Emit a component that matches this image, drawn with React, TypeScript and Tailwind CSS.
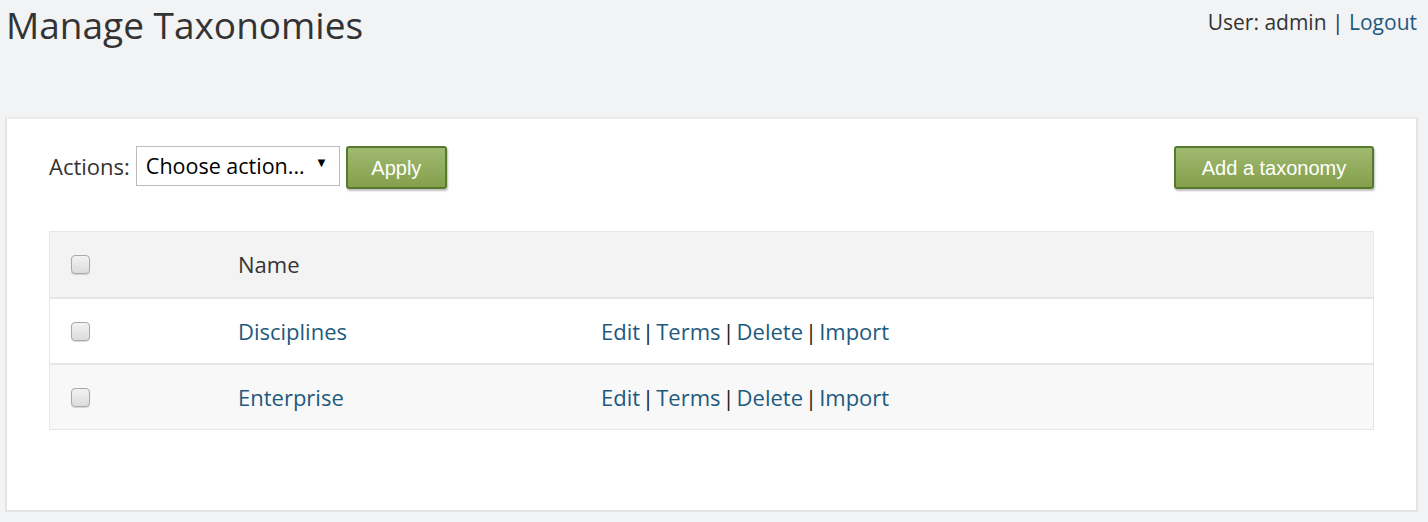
import React from "react";

const font = { fontFamily: '"Open Sans", "Noto Sans", sans-serif' };

function Checkbox() {
  return (
    <span className="inline-block h-[19px] w-[19px] rounded-[4px] border border-[#a9a9a9] bg-gradient-to-b from-[#f2f2f2] to-[#dcdcdc] shadow-[0_1px_1px_rgba(0,0,0,0.15)]" />
  );
}

function GreenButton({ children, w }: { children: React.ReactNode; w: string }) {
  return (
    <button
      className={`${w} h-[43px] rounded-[3px] border-2 border-[#55792d] bg-gradient-to-b from-[#9fb970] to-[#84a04c] text-[20px] text-white shadow-[1px_2px_2px_rgba(0,0,0,0.25)] [font-family:'Liberation_Sans',Arial,sans-serif]`}
    >
      {children}
    </button>
  );
}

function Actions() {
  return (
    <div className="flex items-center text-[#1d5a7e]">
      <a>Edit</a>
      <span className="mx-[2px] text-[#222]">|</span>
      <a>Terms</a>
      <span className="mx-[2px] text-[#222]">|</span>
      <a>Delete</a>
      <span className="mx-[2px] text-[#222]">|</span>
      <a>Import</a>
    </div>
  );
}

export default function App() {
  const rows = ["Disciplines", "Enterprise"];
  return (
    <div className="min-h-[522px] bg-[#f2f3f5] text-[#333]" style={font}>
      <div className="flex h-[48px] items-start justify-between pl-[6px] pr-[11px]">
        <h1 className="text-[37px] leading-[50px] text-[#333]">Manage Taxonomies</h1>
        <div className="mt-[5px] text-[21px] leading-[34px] text-[#333]">
          User: admin | <a className="text-[#1d5a7e]">Logout</a>
        </div>
      </div>
      <div className="ml-[5px] mr-[10px] mt-[69px] border-2 border-t-[#eaeaea] border-l-[#e4e4e4] border-r-[#e4e4e4] border-b-[#e4e4e4] bg-white px-[42px] pb-[80px] pt-[27px]">
        <div className="flex items-start justify-between">
          <div className="flex items-start gap-[6px]">
            <span className="mt-[4px] text-[22px] leading-[32px] text-[#333]">Actions:</span>
            <div className="flex h-[40px] w-[204px] items-center justify-between border border-[#bcbcbc] bg-white pl-[9px] pr-[11px] text-[21.5px] text-black">
              <span>Choose action...</span>
              <span className="text-[13px] mb-[6px]">▼</span>
            </div>
            <GreenButton w="w-[101px]">Apply</GreenButton>
          </div>
          <GreenButton w="w-[200px]">Add a taxonomy</GreenButton>
        </div>
        <div className="mt-[42px] border border-[#e6e6e6] text-[22px]">
          <div className="grid h-[65px] grid-cols-[188px_363px_1fr] items-center bg-[#f3f3f3]">
            <div className="pl-[21px] flex items-center"><Checkbox /></div>
            <div className="text-[#333]">Name</div>
            <div />
          </div>
          {rows.map((r, i) => (
            <div
              key={r}
              className={`grid h-[66px] grid-cols-[188px_363px_1fr] items-center border-t-2 border-[#e6e6e6] ${i === 1 ? "bg-[#f8f8f8]" : "bg-white"}`}
            >
              <div className="pl-[21px] flex items-center"><Checkbox /></div>
              <a className="text-[#1d5a7e]">{r}</a>
              <Actions />
            </div>
          ))}
        </div>
      </div>
    </div>
  );
}
